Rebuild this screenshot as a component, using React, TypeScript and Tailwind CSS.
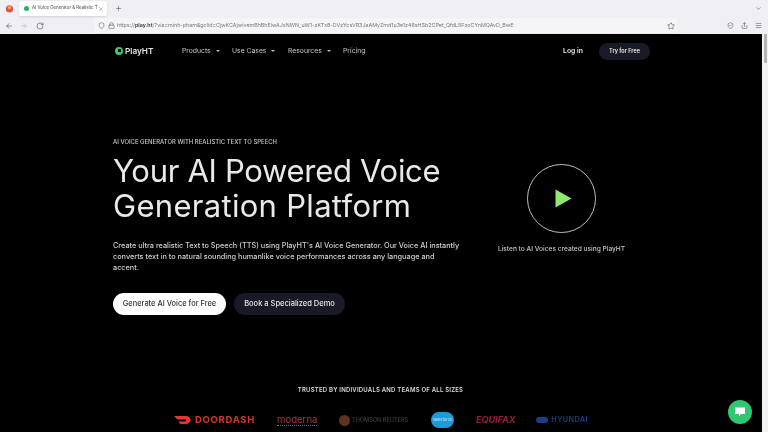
import { ChevronDown, ArrowLeft, ArrowRight, RotateCw, Shield, Lock, Star, Plus, X, Menu, Share, ShieldCheck } from 'lucide-react';

const navItems = [
  { label: 'Products', caret: true, width: 'w-[50px]' },
  { label: 'Use Cases', caret: true, width: 'w-[56px]' },
  { label: 'Resources', caret: true, width: 'w-[55px]' },
  { label: 'Pricing', caret: false, width: 'w-[30px]' },
];

function Caret() {
  return <span className="ml-[5px] h-0 w-0 border-x-[2px] border-t-[2px] border-x-transparent border-t-[#bbb]" />;
}

function BrowserChrome() {
  return (
    <div className="h-[34px] shrink-0 bg-[#f0f0f4] text-[#5b5b66]">
      {/* Tab strip */}
      <div className="flex h-[17px] items-center">
        <div className="flex w-[19px] justify-center">
          <svg width="9" height="9" viewBox="0 0 10 10">
            <circle cx="5" cy="5.5" r="4" fill="#d9534f" />
            <circle cx="5" cy="4" r="2" fill="#f2a65a" />
          </svg>
        </div>
        <div className="flex h-[15px] w-[88px] items-center rounded-[2px] bg-white pl-[5px] pr-[3px] shadow-sm">
          <span className="h-[5px] w-[5px] shrink-0 rounded-full bg-[#2fa866]" />
          <span className="ml-[3px] flex-1 whitespace-nowrap text-[4.4px] leading-none text-[#444]">AI Voice Generator &amp; Realistic T</span>
          <X size={6} strokeWidth={1.5} className="shrink-0" />
        </div>
        <Plus size={7} className="ml-[8px]" />
        <ChevronDown size={7} className="ml-auto mr-[6px]" />
      </div>
      {/* Toolbar */}
      <div className="flex h-[17px] items-center">
        <ArrowLeft size={8} className="ml-[5px]" />
        <ArrowRight size={8} className="ml-[7px] text-[#b8b8c0]" />
        <RotateCw size={8} className="ml-[8px]" />
        <div className="ml-[50px] flex h-[15px] w-[583px] items-center bg-[#f5f5f7] pl-[4px] pr-[2px]">
          <Shield size={7} />
          <Lock size={7} className="ml-[3px]" />
          <span className="ml-[2px] flex-1 whitespace-nowrap text-[5.35px] leading-none text-[#77777f]">
            https://<b className="font-semibold text-[#333]">play.ht</b>/?via=minh-pham&amp;gclid=CjwKCAjwivemBhBhEiwAJxNWN_uW1-zKTx8-DVzYcsVR3JaAMyZmd1u3e1z46sHSb2CPet_QfdL5FxoCYnMQAvD_BwE
          </span>
          <Star size={8} />
        </div>
        <div className="ml-auto mr-[6px] flex items-center gap-[7px]">
          <ShieldCheck size={7} />
          <Share size={7} />
          <Menu size={7} />
        </div>
      </div>
    </div>
  );
}

function Header() {
  return (
    <header className="flex h-[34px] items-center pl-[115px] pr-[112px]">
      <div className="flex w-[37px] items-center gap-[2px]">
        <span className="flex h-[8px] w-[8px] shrink-0 items-center justify-center rounded-full bg-[#37c871]">
          <span className="h-[3px] w-[3px] bg-black" />
        </span>
        <span className="text-[8.2px] font-semibold text-[#e6e6e6]">PlayHT</span>
      </div>
      <nav className="ml-[30px] flex items-center text-[6.8px] text-[#c8c8c8]">
        {navItems.map((item) => (
          <span key={item.label} className={`flex items-center whitespace-nowrap ${item.width}`}>
            {item.label}
            {item.caret && <Caret />}
          </span>
        ))}
      </nav>
      <span className="ml-auto text-[6.8px] font-semibold text-[#e4e4e4]">Log in</span>
      <span className="ml-[16px] flex h-[17px] w-[51px] items-center justify-center rounded-full bg-[#181a27] text-[5.5px] font-semibold text-[#e8e8e8]">
        Try for Free
      </span>
    </header>
  );
}

function Hero() {
  return (
    <section className="flex pl-[113px] pt-[69px]">
      <div className="w-[340px]">
        <p className="text-[5.95px] leading-[10px] font-medium whitespace-nowrap text-[#c8c8c8]">AI VOICE GENERATOR WITH REALISTIC TEXT TO SPEECH</p>
        <h1 className="mt-[6px] text-[31px] leading-[35px] whitespace-nowrap text-[#e9e9e9]">
          <span className="block tracking-[-0.3px]">Your AI Powered Voice</span>
          <span className="block tracking-[0.3px]">Generation Platform</span>
        </h1>
        <p className="mt-[17px] w-[352px] text-[7.3px] leading-[11px] font-medium text-[#cfcfcf]">
          Create ultra realistic Text to Speech (TTS) using PlayHT's AI Voice Generator. Our Voice AI instantly converts text in to natural sounding humanlike voice performances across any language and
          <br />
          accent.
        </p>
        <div className="mt-[20px] flex gap-[8px]">
          <span className="flex h-[22px] w-[113px] items-center justify-center rounded-full bg-white text-[7.45px] font-medium whitespace-nowrap text-[#333]">
            Generate AI Voice for Free
          </span>
          <span className="flex h-[22px] w-[111px] items-center justify-center rounded-full bg-[#181a27] text-[7.5px] font-medium whitespace-nowrap text-[#e6e6e6]">
            Book a Specialized Demo
          </span>
        </div>
      </div>
      <div className="ml-[41px] flex w-[135px] flex-col items-center pt-[27px]">
        <div className="flex h-[69px] w-[69px] items-center justify-center rounded-full border border-[#bdbdbd]">
          <svg width="17" height="19" viewBox="0 0 17 19" className="ml-[4px]">
            <path d="M0.5 0.5 L16.5 9.5 L0.5 18.5 Z" fill="#8ee86e" />
          </svg>
        </div>
        <p className="mt-[12px] text-[6.6px] font-medium whitespace-nowrap text-[#c4c4c4]">Listen to AI Voices created using PlayHT</p>
      </div>
    </section>
  );
}

function Logos() {
  return (
    <section className="mt-[70px] flex flex-col items-center pr-[6px]">
      <p className="pl-[5px] text-[6px] leading-[10px] font-semibold tracking-[0.2px] text-[#dcdcdc]">TRUSTED BY INDIVIDUALS AND TEAMS OF ALL SIZES</p>
      <div className="mt-[15px] ml-[174px] flex h-[20px] items-center self-start">
        <div className="flex w-[103px] items-center">
          <svg width="17" height="8" viewBox="0 0 21 10">
            <path d="M0 0 H14 C19 0 21 3 20.5 5.5 C20 8.5 17 10 13 10 H7.5 L5.5 7 H14 C15.5 7 15.5 4.5 14 4.5 H4 Z" fill="#e8382e" />
          </svg>
          <span className="ml-[4px] text-[9.5px] font-bold tracking-[0.7px] text-[#d8352b]">DOORDASH</span>
        </div>
        <div className="w-[62px]">
          <span className="block w-[40px] border-b border-dotted border-[#56708a] text-[9.6px] leading-[10px] text-[#a33a3f]">moderna</span>
        </div>
        <div className="flex w-[92px] items-center">
          <span className="h-[11px] w-[11px] rounded-full bg-[#5c3220]" />
          <span className="ml-[2px] text-[5.6px] font-medium whitespace-nowrap text-[#3f3f3f]">THOMSON REUTERS</span>
        </div>
        <div className="flex h-[16px] w-[23px] items-center justify-center rounded-full bg-[#1f9ad8] text-[4px] text-[#cfe9f7]">salesforce</div>
        <span className="ml-[22px] text-[9.3px] font-bold italic tracking-[-0.2px] text-[#8f1f33]">EQUIFAX</span>
        <div className="ml-[21px] flex items-center">
          <span className="h-[6px] w-[12px] rounded-full bg-[#1b3f86]" />
          <span className="ml-[3px] text-[7.3px] font-semibold tracking-[0.4px] text-[#1b3f86]">HYUNDAI</span>
        </div>
      </div>
    </section>
  );
}

export default function App() {
  return (
    <div className="flex h-[432px] w-[768px] flex-col overflow-hidden bg-black font-['Inter',sans-serif] blur-[0.35px]">
      <BrowserChrome />
      <div className="relative flex min-h-0 flex-1">
        <main className="w-[762px] bg-black">
          <Header />
          <Hero />
          <Logos />
        </main>
        {/* Scrollbar */}
        <div className="w-[6px] bg-[#f2f2f2] pl-[2px]">
          <div className="h-[29px] w-[3px] bg-[#b5b5b5]" />
        </div>
        {/* Chat bubble */}
        <div className="absolute right-[16px] bottom-[8px] flex h-[24px] w-[24px] items-center justify-center rounded-full bg-[#2fc772]">
          <svg width="12" height="10" viewBox="0 0 12 10">
            <path d="M1 0.5 H11 V7 H7 L5 9.5 V7 H1 Z" fill="#fff" />
          </svg>
        </div>
      </div>
    </div>
  );
}
